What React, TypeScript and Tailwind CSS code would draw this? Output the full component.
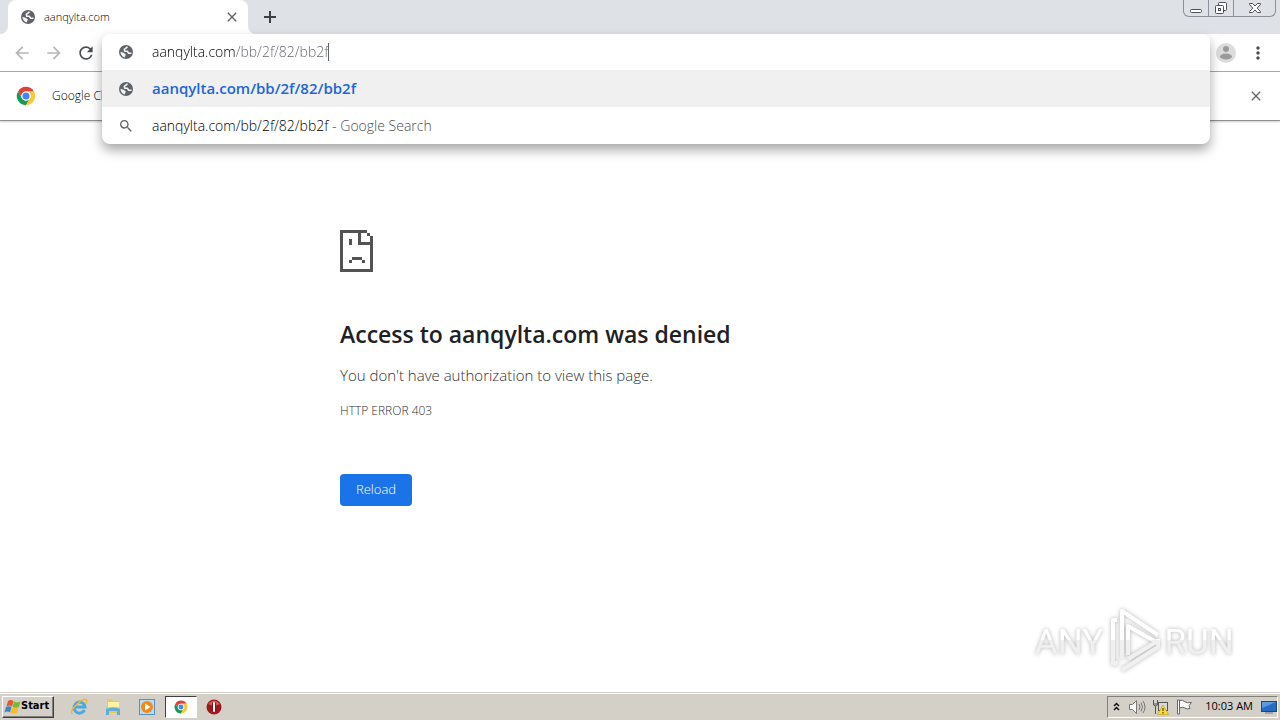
import { useState } from "react"
import { MdArrowBack, MdArrowForward, MdClose, MdMoreVert, MdRefresh, MdSearch } from "react-icons/md"

const host = "aanqylta.com"
const url = "aanqylta.com/bb/2f/82/bb2f"

function Globe({ className }: { className?: string }) {
    return (
        <svg viewBox="0 0 16 16" className={className} aria-hidden="true">
            <circle cx="8" cy="8" r="7" fill="#606367" />
            <path d="M9.500 2.800L6.300 5.300 6.800 7.300H9.300L10.700 9.300H13.500" fill="none" stroke="#f4f4f4" strokeWidth="1.600" strokeLinejoin="round" />
            <path d="M2.400 7.800L5.500 8.800 7.800 10.300 6.800 13.500Q2.800 12.500 2.400 7.800z" fill="#f4f4f4" />
        </svg>
    )
}

function ChromeLogo({ className }: { className?: string }) {
    return (
        <svg viewBox="0 0 48 48" className={className} aria-hidden="true">
            <circle cx="24" cy="24" r="22" fill="#fff" />
            <path d="M24 13h19.1A22 22 0 0 0 4.9 13l9.6 16.500A11 11 0 0 1 24 13z" fill="#df4132" />
            <path d="M14.500 29.500L4.900 13A22 22 0 0 0 24 46l9.500-16.500a11 11 0 0 1-19 0z" fill="#159a57" />
            <path d="M33.500 29.500L24 46A22 22 0 0 0 43.100 13H24a11 11 0 0 1 9.500 16.500z" fill="#fcc934" />
            <circle cx="24" cy="24" r="11" fill="#fff" />
            <circle cx="24" cy="24" r="8.5" fill="#4285f4" />
        </svg>
    )
}

function WindowButtons() {
    return (
        <div className="mr-1 flex h-[17px] rounded-b-md border border-t-0 border-[#8b909b] text-[#4b505a]">
            <button aria-label="Minimize" className="flex w-[25px] items-center justify-center border-r border-[#8b909b]">
                <svg width="14" height="14" viewBox="0 0 14 14" fill="#fff" stroke="currentColor">
                    <rect x="1.500" y="8.500" width="11" height="3" rx="1" />
                </svg>
            </button>
            <button aria-label="Restore" className="flex w-[25px] items-center justify-center border-r border-[#8b909b]">
                <svg width="14" height="14" viewBox="0 0 14 14" fill="#fff" stroke="currentColor">
                    <rect x="4.500" y="1.500" width="8" height="8" rx="1" />
                    <rect x="1.500" y="4.500" width="8" height="8" rx="1" />
                    <rect x="4.500" y="7.500" width="2" height="2" />
                </svg>
            </button>
            <button aria-label="Close window" className="flex w-[41px] items-center justify-center">
                <svg width="14" height="14" viewBox="0 0 14 14" fill="#fff" stroke="currentColor">
                    <path d="M1.500 2.500h3L7 5l2.500-2.500h3v1L9.200 7.200l3.300 3.300v1h-3L7 9l-2.500 2.500h-3v-1l3.300-3.300L1.500 3.500z" />
                </svg>
            </button>
        </div>
    )
}

function TabStrip() {
    return (
        <div className="flex h-[34px] items-start bg-[#dee1e6]">
            <div className="flex h-[34px] w-2 bg-white">
                <div className="h-full w-full rounded-br-lg bg-[#dee1e6]" />
            </div>
            <div className="flex h-[34px] w-60 items-center rounded-t-lg bg-white pl-3 pr-2">
                <Globe className="size-4" />
                <span className="ml-2 flex-1 text-[11px] font-light text-black">aanqylta.com</span>
                <button aria-label="Close tab" className="text-[#5f6368]">
                    <MdClose className="size-4" />
                </button>
            </div>
            <div className="flex h-[34px] w-2 bg-white">
                <div className="h-full w-full rounded-bl-lg bg-[#dee1e6]" />
            </div>
            <button aria-label="New tab" className="flex h-[34px] w-7 items-center justify-center text-[#3c4043]">
                <svg width="14" height="14" viewBox="0 0 14 14" stroke="currentColor" strokeWidth="2">
                    <path d="M7 1v12M1 7h12" />
                </svg>
            </button>
            <div className="flex-1" />
            <WindowButtons />
        </div>
    )
}

function Omnibox() {
    const [value, setValue] = useState(url)

    return (
        <div className="absolute left-[102px] right-[70px] top-[34px] z-10 rounded-lg bg-white text-sm font-light shadow-[0_6px_12px_rgba(0,0,0,0.35)]">
            <div className="flex h-9 items-center pl-4">
                <Globe className="size-4" />
                <input
                    aria-label="Address and search bar"
                    value={value}
                    onChange={(e) => setValue(e.target.value)}
                    className="ml-[18px] bg-[linear-gradient(to_right,#000_83px,#5f6368_83px)] bg-clip-text text-transparent outline-none [field-sizing:content]"
                />
                <span className="h-[18px] w-px bg-[#5f6368]" />
            </div>
            <a href="#page" className="flex h-[37px] items-center bg-[#f0f0f0] pl-4">
                <Globe className="size-4" />
                <span className="ml-[18px] text-[15px] font-semibold text-[#1f66d6]">{url}</span>
            </a>
            <a href="#search" className="flex h-[37px] items-center pl-4">
                <MdSearch className="size-4 text-[#5f6368]" />
                <span className="ml-[18px] whitespace-pre text-black">{url}</span>
                <span className="whitespace-pre text-[#4a4d51]"> - Google Search</span>
            </a>
        </div>
    )
}

function Toolbar() {
    return (
        <div className="flex h-[38px] items-center border-b border-[#a9a9a9] bg-white px-3">
            <button aria-label="Back" className="mr-3 text-[#b4b6b9]">
                <MdArrowBack className="size-5" />
            </button>
            <button aria-label="Forward" className="mr-3 text-[#b4b6b9]">
                <MdArrowForward className="size-5" />
            </button>
            <button aria-label="Reload page" className="text-[#4a4d51]">
                <MdRefresh className="size-5" />
            </button>
            <div className="flex-1" />
            <button aria-label="Profile" className="mr-3">
                <svg width="20" height="20" viewBox="0 0 20 20">
                    <circle cx="10" cy="10" r="10" fill="#dcdcdc" />
                    <circle cx="10" cy="6" r="3" fill="#9a9a9a" />
                    <ellipse cx="10" cy="13.500" rx="6" ry="3" fill="#9a9a9a" />
                </svg>
            </button>
            <button aria-label="Menu" className="text-[#4a4d51]">
                <MdMoreVert className="size-5" />
            </button>
        </div>
    )
}

function InfoBar() {
    return (
        <div className="flex h-[49px] items-center border-b border-[#8f8f8f] px-4 shadow-[0_1px_2px_rgba(0,0,0,0.2)]">
            <ChromeLogo className="size-5" />
            <span className="ml-4 flex-1 text-xs font-light text-black">Google Chrome</span>
            <button aria-label="Dismiss" className="text-[#5f6368]">
                <MdClose className="size-4" />
            </button>
        </div>
    )
}

function ErrorPage() {
    return (
        <main className="relative flex-1">
            <div className="mx-auto w-[600px] pt-[109px]">
                <svg width="33" height="42" viewBox="0 0 33 42" fill="#535353" shapeRendering="crispEdges">
                    <path d="M0 0h27v3h-6v9h9V6h3v36H0zM3 3v36h27V15H18V3z" fillRule="evenodd" />
                    <path d="M27 3h3v3h-3zM9 9h3v6H9zM12 27h10v3H12zM9 30h3v3H9zM22 30h3v3h-3z" />
                </svg>
                <h1 className="mt-[46px] text-[23px]/8 font-semibold text-[#202124]">Access to {host} was denied</h1>
                <p className="mt-[13px] text-[15px]/6 font-light text-[#303030]">You don't have authorization to view this page.</p>
                <p className="mt-3 text-xs/6 font-light text-[#303030]">HTTP ERROR 403</p>
                <button className="mt-[51px] h-8 rounded-sm bg-[#1a73e8] px-4 text-[13px] font-light text-white">Reload</button>
            </div>
            <Watermark />
        </main>
    )
}

function Watermark() {
    return (
        <svg
            width="204"
            height="72"
            viewBox="0 0 204 72"
            className="absolute bottom-4 right-11 font-['Roboto',sans-serif] text-[35px] drop-shadow-[0_0_2px_rgba(0,0,0,0.3)]"
            fill="url(#sheen)"
        >
            <defs>
                <linearGradient id="sheen" gradientUnits="userSpaceOnUse" x1="0" y1="0" x2="0" y2="72">
                    <stop offset="0.5" stopColor="#ffffff" />
                    <stop offset="0.5" stopColor="#f0f0f0" />
                </linearGradient>
            </defs>
            <text x="37" y="50" textAnchor="middle">ANY</text>
            <text x="167" y="50" textAnchor="middle">RUN</text>
            <g fill="none" stroke="url(#sheen)" strokeWidth="4" strokeLinejoin="round">
                <path d="M90 55V7l36 24" />
                <path d="M96 51V22l28 16-28 17" />
                <path d="M81 61V16h4M81 61l5-3" />
                <path d="M90 66l36-23v-8" />
            </g>
        </svg>
    )
}

function WindowsFlag() {
    return (
        <svg width="17" height="16" viewBox="0 0 17 16" aria-hidden="true">
            <path d="M4 2q3-2 5.500 0L8 7.500q-2.500-2-5.500 0z" fill="#e8552a" />
            <path d="M10 2.500q3 1.500 6.500 0L15 8q-3 1.500-6.500 0z" fill="#79b83d" />
            <path d="M2 8q3-1.500 5.500 0L6 13.500q-2.500-2-5.500 0z" fill="#3b82cf" />
            <path d="M8 8.500q3 1.500 6.500 0L13 14q-3 1.500-6.500 0z" fill="#f5bd27" />
        </svg>
    )
}

function QuickLaunch() {
    return (
        <div className="ml-2 flex h-full items-center">
            <button aria-label="Internet Explorer" className="flex w-[34px] justify-center">
                <svg width="18" height="18" viewBox="0 0 18 18" fill="none">
                    <path d="M14.500 12a5.500 5.500 0 1 1 .500-3H4.500" stroke="#4aa9e0" strokeWidth="3" />
                    <path d="M2 16C-1 12 12 0 16 1.500c2 1-.500 4-.500 4" stroke="#edb92e" strokeWidth="1.500" />
                </svg>
            </button>
            <button aria-label="Windows Explorer" className="flex w-[34px] justify-center">
                <svg width="18" height="18" viewBox="0 0 18 18">
                    <path d="M3 1h5l1 2h6v12H3z" fill="#e9c860" />
                    <path d="M4 4h11v9H4z" fill="#fff1a8" />
                    <path d="M2 9h14v2H2z" fill="#a5d8e6" />
                    <path d="M2 11q7-3 14 0v6h-3v-4H5v4H2z" fill="#62add2" />
                </svg>
            </button>
            <button aria-label="Media Player" className="flex w-[34px] justify-center">
                <svg width="16" height="16" viewBox="0 0 16 16">
                    <rect x=".5" y=".5" width="15" height="15" fill="#b9dcf4" stroke="#5393c7" />
                    <circle cx="8" cy="8" r="6" fill="#f28a16" />
                    <path d="M6 4.500v7L11.500 8z" fill="#fff" />
                </svg>
            </button>
            <button
                aria-label="Google Chrome"
                className="ml-px flex h-[22px] w-8 items-center justify-center border border-b-white border-l-[#404040] border-r-white border-t-[#404040] bg-white"
            >
                <ChromeLogo className="size-[14px]" />
            </button>
            <button aria-label="Opera" className="flex w-[34px] justify-center">
                <svg width="16" height="16" viewBox="0 0 16 16">
                    <circle cx="8" cy="8" r="7.500" fill="#9c1a1e" />
                    <path d="M2 5q6-7 12 0-6 3-12 0z" fill="#d35a58" />
                    <rect x="6" y="3" width="4" height="10" rx="1.500" fill="#8c1218" />
                    <rect x="7" y="3" width="2" height="10" rx="1" fill="#fff" />
                </svg>
            </button>
        </div>
    )
}

function Tray() {
    return (
        <div className="flex h-[22px] items-center border border-b-white border-l-[#808080] border-r-white border-t-[#808080] pl-1">
            <button aria-label="Show hidden icons" className="flex w-2 justify-center">
                <svg width="7" height="9" viewBox="0 0 7 9" fill="none" stroke="#111" strokeWidth="1.5">
                    <path d="M1 4l2.500-2.500L6 4M1 8l2.500-2.500L6 8" />
                </svg>
            </button>
            <svg className="ml-2" width="18" height="16" viewBox="0 0 18 16" fill="none" stroke="#777">
                <path d="M1.500 5.500h3l4-4v13l-4-4h-3z" fill="#fafafa" />
                <path d="M11 5q2 3 0 6M13 3.500q3 4.500 0 9M15 2q4 6 0 12" />
            </svg>
            <svg className="ml-1.5" width="18" height="16" viewBox="0 0 18 16">
                <path d="M1.500 1v4q0 2 2 2v8M5.500 1v4q0 2-2 2M1.500 5h4" fill="none" stroke="#555" />
                <rect x="6.500" y="3.500" width="9" height="8" fill="#d8d8d8" stroke="#555" />
                <path d="M11 6l5.500 9.500h-11z" fill="#ffdc29" stroke="#b18c00" strokeWidth=".5" />
                <path d="M11 9v3M11 13v1.500" stroke="#222" />
            </svg>
            <svg className="ml-1.5" width="17" height="16" viewBox="0 0 17 16" fill="#fff" stroke="#666">
                <path d="M3.500 1.500q3-1 5 1t7 1L13 6.500l1 3q-3 1-5-.500t-5.500 0" />
                <path d="M1.500 1v14h2V1z" />
            </svg>
            <span className="ml-3 whitespace-nowrap text-[11px] text-black">10:03 AM</span>
            <button aria-label="Show desktop" className="ml-2">
                <svg width="16" height="16" viewBox="0 0 16 16">
                    <rect x=".5" y="2.500" width="15" height="10" fill="#276cc4" stroke="#174985" />
                    <path d="M1 3h14L1 9z" fill="#5c9ae0" />
                    <path d="M4 14h8" stroke="#777" />
                </svg>
            </button>
        </div>
    )
}

function Taskbar() {
    return (
        <footer className="border-t border-[#d4d0c8] bg-[#d4d0c8]">
            <div className="flex h-[27px] items-center border-t border-white px-0.5 pb-px">
                <button className="flex h-[22px] items-center border border-b-[#404040] border-l-white border-r-[#404040] border-t-white px-px pr-1 font-['DejaVu_Sans_Condensed','DejaVu_Sans',sans-serif] text-[11px] font-bold text-black shadow-[inset_-1px_-1px_#808080]">
                    <WindowsFlag />
                    Start
                </button>
                <QuickLaunch />
                <div className="flex-1" />
                <Tray />
            </div>
        </footer>
    )
}

export default function App() {
    return (
        <div className="relative flex min-h-screen flex-col bg-white font-['Open_Sans',sans-serif]">
            <TabStrip />
            <Toolbar />
            <InfoBar />
            <Omnibox />
            <ErrorPage />
            <Taskbar />
        </div>
    )
}
